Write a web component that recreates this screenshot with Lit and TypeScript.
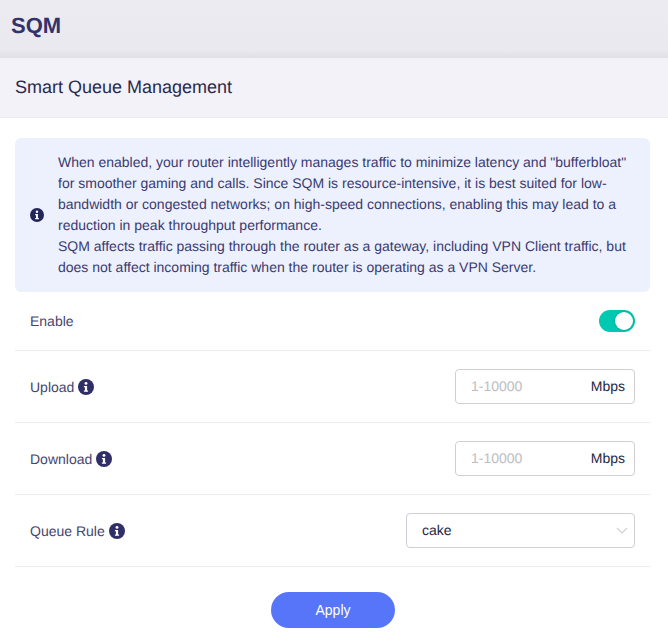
import { LitElement, html, css, svg } from "lit";
import { customElement } from "lit/decorators.js";

const infoIcon = (size: number, cls: string) => html`<svg class=${cls} width=${size} height=${size} viewBox="0 0 16 16" aria-hidden="true">
  <circle cx="8" cy="8" r="8" fill="currentColor"></circle>
  ${svg`<circle cx="8" cy="4.4" r="1.45" fill="#fff"></circle>
  <path d="M5.9 6.9h3.2v4.6h1v1.3H5.9v-1.3h1v-3.3h-1z" fill="#fff"></path>`}
</svg>`;

@customElement("app-root")
export class AppRoot extends LitElement {
  static styles = css`
    :host {
      display: block;
      width: 668px;
      height: 643px;
      overflow: hidden;
      background: #fff;
      font-family: "Liberation Sans", Arial, sans-serif;
      font-size: 14px;
      color: #2f2f5f;
      text-rendering: geometricPrecision;
    }
    .page-head {
      height: 58px;
      box-sizing: border-box;
      padding: 11px 11px 0;
      background: linear-gradient(#ebebf1 0, #e9e9ef 50px, #dfdfe6 58px);
    }
    .page-title {
      margin: 0;
      font-size: 22px;
      line-height: 29px;
      font-weight: 700;
      color: #33336b;
    }
    .card-head {
      height: 60px;
      box-sizing: border-box;
      padding: 0 15px;
      display: flex;
      align-items: center;
      background: #f2f2f8;
      border-bottom: 1px solid #ebebef;
      font-size: 18px;
      color: #2a2a4e;
    }
    .body {
      padding: 20px 18px 0 15px;
    }
    .notice {
      display: flex;
      align-items: center;
      gap: 14px;
      height: 154px;
      box-sizing: border-box;
      padding: 0 15px;
      border-radius: 6px;
      background: #edf1fd;
      color: #3a3a70;
      line-height: 21px;
    }
    .notice p {
      margin: 0;
    }
    .notice-icon {
      flex: none;
      color: #22265c;
    }
    .row {
      display: flex;
      align-items: center;
      justify-content: space-between;
      height: 72px;
      box-sizing: border-box;
      padding: 0 15px;
      border-bottom: 1px solid #ececf0;
    }
    .row.first {
      height: 59px;
    }
    .label {
      display: flex;
      align-items: center;
      gap: 4px;
      color: #45456f;
    }
    .row-icon {
      color: #2f2f66;
    }
    .switch {
      position: relative;
      width: 36px;
      height: 22px;
      border-radius: 11px;
      background: #00c9b2;
    }
    .knob {
      position: absolute;
      top: 2px;
      right: 2px;
      width: 18px;
      height: 18px;
      border-radius: 50%;
      background: #fff;
      box-shadow: 0 0 3px rgba(0, 0, 0, 0.25);
    }
    .field {
      display: flex;
      align-items: center;
      justify-content: space-between;
      box-sizing: border-box;
      width: 180px;
      height: 35px;
      padding: 0 9px 2px 15px;
      border: 1px solid #cfcfd6;
      border-radius: 4px;
      background: #fff;
      color: #26263f;
    }
    .placeholder {
      color: #bdbdc4;
    }
    .select {
      width: 229px;
      padding: 0 6px 2px 15px;
    }
    .chevron {
      margin-top: 2px;
    }
    .actions {
      display: flex;
      justify-content: center;
      padding-top: 25px;
      padding-left: 1px;
    }
    .apply {
      width: 124px;
      height: 36px;
      border: 0;
      border-radius: 18px;
      background: #5675f9;
      color: #fff;
      font: inherit;
      padding: 0;
    }
  `;

  render() {
    return html`
      <header class="page-head"><h1 class="page-title">SQM</h1></header>
      <div class="card-head">Smart Queue Management</div>
      <main class="body">
        <div class="notice">
          ${infoIcon(14, "notice-icon")}
          <p>When enabled, your router intelligently manages traffic to minimize latency and "bufferbloat" for smoother gaming and calls. Since SQM is resource-intensive, it is best suited for low-bandwidth or congested networks; on high-speed connections, enabling this may lead to a reduction in peak throughput performance.<br />SQM affects traffic passing through the router as a gateway, including VPN Client traffic, but does not affect incoming traffic when the router is operating as a VPN Server.</p>
        </div>
        <div class="row first">
          <span class="label">Enable</span>
          <div class="switch"><div class="knob"></div></div>
        </div>
        <div class="row">
          <span class="label">Upload ${infoIcon(16, "row-icon")}</span>
          <div class="field"><span class="placeholder">1-10000</span><span>Mbps</span></div>
        </div>
        <div class="row">
          <span class="label">Download ${infoIcon(16, "row-icon")}</span>
          <div class="field"><span class="placeholder">1-10000</span><span>Mbps</span></div>
        </div>
        <div class="row">
          <span class="label">Queue Rule ${infoIcon(16, "row-icon")}</span>
          <div class="field select">
            <span>cake</span>
            <svg class="chevron" width="12" height="7" viewBox="0 0 12 7" aria-hidden="true"><path d="M1 1l5 5 5-5" fill="none" stroke="#cfcfd6" stroke-width="1.2"></path></svg>
          </div>
        </div>
        <div class="actions"><button class="apply">Apply</button></div>
      </main>
    `;
  }
}
